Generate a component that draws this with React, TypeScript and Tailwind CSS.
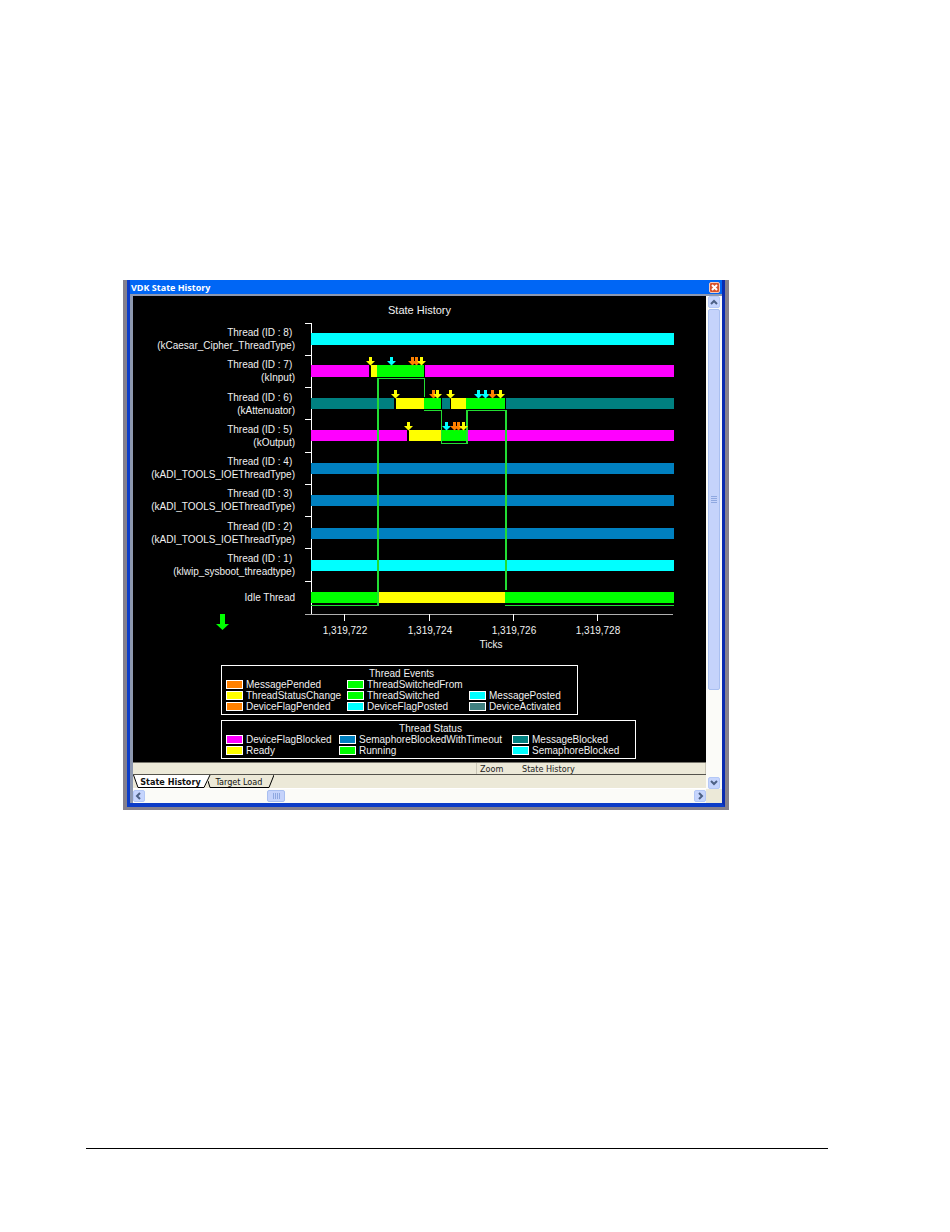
import React from "react";
import { clsx } from "clsx";

const MAGENTA = "#ff00ff";
const YELLOW = "#ffff00";
const GREEN = "#00ff00";
const CYAN = "#00ffff";
const TEAL = "#008080";
const BLUE = "#0080c0";
const ORANGE = "#ff8000";

interface Segment {
  from: number;
  to: number;
  color: string;
}

interface ThreadRow {
  y: number;
  segments: Segment[];
  events?: { x: number; color: string }[];
}

const threadLabels = [
  ["Thread (ID : 8)", "(kCaesar_Cipher_ThreadType)"],
  ["Thread (ID : 7)", "(kInput)"],
  ["Thread (ID : 6)", "(kAttenuator)"],
  ["Thread (ID : 5)", "(kOutput)"],
  ["Thread (ID : 4)", "(kADI_TOOLS_IOEThreadType)"],
  ["Thread (ID : 3)", "(kADI_TOOLS_IOEThreadType)"],
  ["Thread (ID : 2)", "(kADI_TOOLS_IOEThreadType)"],
  ["Thread (ID : 1)", "(klwip_sysboot_threadtype)"],
];

const rows: ThreadRow[] = [
  { y: 13, segments: [{ from: 6, to: 369, color: CYAN }] },
  {
    y: 45,
    segments: [
      { from: 6, to: 64, color: MAGENTA },
      { from: 66, to: 72, color: YELLOW },
      { from: 72, to: 119, color: GREEN },
      { from: 120, to: 369, color: MAGENTA },
    ],
    events: [
      { x: 65, color: YELLOW },
      { x: 86, color: CYAN },
      { x: 107, color: ORANGE },
      { x: 111, color: ORANGE },
      { x: 116, color: YELLOW },
    ],
  },
  {
    y: 78,
    segments: [
      { from: 6, to: 89, color: TEAL },
      { from: 91, to: 119, color: YELLOW },
      { from: 119, to: 136, color: GREEN },
      { from: 137, to: 145, color: TEAL },
      { from: 146, to: 161, color: YELLOW },
      { from: 161, to: 200, color: GREEN },
      { from: 201, to: 369, color: TEAL },
    ],
    events: [
      { x: 90, color: YELLOW },
      { x: 128, color: ORANGE },
      { x: 132, color: YELLOW },
      { x: 145, color: YELLOW },
      { x: 173, color: CYAN },
      { x: 180, color: CYAN },
      { x: 187, color: ORANGE },
      { x: 195, color: YELLOW },
    ],
  },
  {
    y: 110,
    segments: [
      { from: 6, to: 102, color: MAGENTA },
      { from: 104, to: 136, color: YELLOW },
      { from: 136, to: 162, color: GREEN },
      { from: 163, to: 369, color: MAGENTA },
    ],
    events: [
      { x: 103, color: YELLOW },
      { x: 141, color: CYAN },
      { x: 149, color: ORANGE },
      { x: 153, color: ORANGE },
      { x: 158, color: YELLOW },
    ],
  },
  { y: 143, segments: [{ from: 6, to: 369, color: BLUE }] },
  { y: 175, segments: [{ from: 6, to: 369, color: BLUE }] },
  { y: 208, segments: [{ from: 6, to: 369, color: BLUE }] },
  { y: 240, segments: [{ from: 6, to: 369, color: CYAN }] },
  {
    y: 272,
    segments: [
      { from: 6, to: 74, color: GREEN },
      { from: 74, to: 200, color: YELLOW },
      { from: 200, to: 369, color: GREEN },
    ],
  },
];

const rowTicks = [3, 35, 67, 99, 132, 164, 196, 228, 261];

const timeTicks = [
  { x: 39, label: "1,319,722" },
  { x: 124, label: "1,319,724" },
  { x: 208, label: "1,319,726" },
  { x: 292, label: "1,319,728" },
];

const eventLegend = [
  { label: "MessagePended", swatch: "bg-[#ff8000]" },
  { label: "ThreadSwitchedFrom", swatch: "bg-[#00ff00]" },
  null,
  { label: "ThreadStatusChange", swatch: "bg-[#ffff00]" },
  { label: "ThreadSwitched", swatch: "bg-[#00ff00]" },
  { label: "MessagePosted", swatch: "bg-[#00ffff]" },
  { label: "DeviceFlagPended", swatch: "bg-[#ff8000]" },
  { label: "DeviceFlagPosted", swatch: "bg-[#00ffff]" },
  { label: "DeviceActivated", swatch: "bg-[#408080]" },
];

const statusLegend = [
  { label: "DeviceFlagBlocked", swatch: "bg-[#ff00ff]" },
  { label: "SemaphoreBlockedWithTimeout", swatch: "bg-[#0080c0]" },
  { label: "MessageBlocked", swatch: "bg-[#008080]" },
  { label: "Ready", swatch: "bg-[#ffff00]" },
  { label: "Running", swatch: "bg-[#00ff00]" },
  { label: "SemaphoreBlocked", swatch: "bg-[#00ffff]" },
];

const Timeline: React.FC = () => (
  <svg viewBox="0 0 369 330" className="block h-auto w-full" role="img" aria-label="Thread timeline">
    <g shapeRendering="crispEdges">
      {/* axes */}
      <path d="M6.5 3V294" stroke="#fff" />
      <path d="M0 294.5H368" stroke="#b0b0b0" />
      {rowTicks.map((y) => (
        <path key={y} d={`M0 ${y + 0.5}H6`} stroke="#fff" />
      ))}
      {timeTicks.map(({ x }) => (
        <path key={x} d={`M${x + 0.5} 294V301`} stroke="#fff" />
      ))}

      {rows.map(({ y, segments }) => (
        <g key={y}>
          {segments.map(({ from, to, color }) => (
            <rect key={from} x={from} y={y} width={to - from} height={y < 60 ? 12 : 11} fill={color} />
          ))}
        </g>
      ))}

      {/* context switches */}
      <g fill="none" stroke="#22dd33">
        <path d="M6 285.5H73" />
        <path d="M73 286V58" strokeWidth={2} />
        <path d="M72 58.5H119.5V77" />
        <path d="M119 90.5H136.5V123.5H162" />
        <path d="M162 124V90" strokeWidth={2} />
        <path d="M162 90.5H201" />
        <path d="M201 90V270" strokeWidth={2} />
        <path d="M200 285.5H369" />
      </g>
    </g>

    {rows.map(({ y, events }) =>
      events?.map(({ x, color }) => (
        <path
          key={`${y}-${x}`}
          d={`M${x - 1} ${y - 8}h3v4h3l-4.5 4.5l-4.5 -4.5h3z`}
          fill={color}
        />
      ))
    )}

    <g fill="#f0f0f0" fontSize="10" textAnchor="middle">
      {timeTicks.map(({ x, label }) => (
        <text key={x} x={x + 1} y={314}>
          {label}
        </text>
      ))}
      <text x={186} y={328}>
        Ticks
      </text>
    </g>
  </svg>
);

interface LegendProps {
  title: string;
  items: ({ label: string; swatch: string } | null)[];
  className: string;
}

const Legend: React.FC<LegendProps> = ({ title, items, className }) => (
  <section className="w-fit border border-white pb-[2px] pl-1">
    <h3 className="h-[13px] text-center leading-[15px]">{title}</h3>
    <ul className={clsx("grid", className)}>
      {items.map((item, i) => (
        <li key={i} className="flex h-[11px] items-center gap-[3px] leading-[11px] whitespace-nowrap">
          {item && (
            <>
              <span className={clsx("h-[9px] w-[17px] shrink-0 border border-white", item.swatch)} />
              {item.label}
            </>
          )}
        </li>
      ))}
    </ul>
  </section>
);

const ScrollButton: React.FC<{ label: string; d: string }> = ({ label, d }) => (
  <button
    type="button"
    aria-label={label}
    className="flex size-3 shrink-0 items-center justify-center rounded-[2px] border border-[#b4c8f6] bg-[#c6d5fd]"
  >
    <svg viewBox="0 0 10 10" className="size-[10px]" fill="none" stroke="#4d6185" strokeWidth={2}>
      <path d={d} />
    </svg>
  </button>
);

const tabFont = "font-['DejaVu_Sans_Condensed','DejaVu_Sans',sans-serif]";

export default function App() {
  return (
    <main className="bg-white pt-[280px] pb-[83px] font-['Liberation_Sans',Arial,sans-serif] text-[10px]">
      <div className="mr-[221px] ml-[123px] border-x-4 border-b-[3px] border-[#85808c]">
        <div className="border-x-[3px] border-b-4 border-[#0c3cc8] border-r-[#0a2bb0] bg-[#0c3cc8]">
          <header className="flex h-[14px] items-center justify-between bg-[#0066f5] pr-[2px] pl-px">
            <h1 className="font-['Open_Sans',sans-serif] text-[9px] leading-[15px] font-bold text-white">
              VDK State History
            </h1>
            <button
              type="button"
              aria-label="Close"
              className="flex size-[11px] items-center justify-center rounded-[2px] border border-[#f3c9bd] bg-[#d9532c]"
            >
              <svg viewBox="0 0 7 7" className="size-[7px]" stroke="#fff" strokeWidth={2}>
                <path d="M1 1L6 6M6 1L1 6" />
              </svg>
            </button>
          </header>

          <div className="border-t-2 border-l-[3px] border-[#8d98b0] bg-[#ece9d8]">
            <div className="flex">
              <div className="min-w-0 flex-1">
                <div className="bg-black pt-[6px] pb-[3px] text-[#f0f0f0]">
                  <h2 className="h-[18px] text-center text-[11px] leading-[16px]">State History</h2>
                  <div className="flex gap-[10px] pr-8">
                    <div className="flex w-[162px] shrink-0 flex-col pt-[3px] text-right">
                      <ul className="grid h-[258px] grid-rows-8">
                        {threadLabels.map(([id, type]) => (
                          <li key={id} className="flex flex-col justify-center leading-[13px] whitespace-nowrap">
                            <span>{id}&nbsp;</span>
                            <span>{type}</span>
                          </li>
                        ))}
                      </ul>
                      <p className="h-[33px] leading-[33px]">Idle Thread</p>
                      <svg viewBox="0 0 13 16" className="mr-[66px] h-4 w-[13px] self-end" fill={GREEN}>
                        <path d="M4 0h5v10h4l-6.5 6l-6.5 -6h4z" />
                      </svg>
                    </div>
                    <div className="min-w-0 flex-1">
                      <Timeline />
                    </div>
                  </div>
                  <div className="mt-[15px] ml-[88px] flex flex-col gap-[5px]">
                    <Legend
                      title="Thread Events"
                      items={eventLegend}
                      className="grid-cols-[121px_122px_108px]"
                    />
                    <Legend
                      title="Thread Status"
                      items={statusLegend}
                      className="grid-cols-[113px_173px_123px]"
                    />
                  </div>
                </div>

                <div
                  className={clsx(
                    "flex h-3 justify-end border-t border-[#77756c] text-[9px] leading-[12px] text-[#222]",
                    tabFont
                  )}
                >
                  <span className="w-[42px] border-l border-[#c9c6b6] pl-[3px]">Zoom</span>
                  <span className="w-[188px] border-r border-[#c9c6b6] pl-1">State History</span>
                </div>

                <nav
                  className={clsx(
                    "flex h-[15px] border-t border-b border-t-[#55534c] border-b-white text-[9px] text-[#111]",
                    tabFont
                  )}
                >
                  <button type="button" className="relative h-[13px] w-[75px] font-bold">
                    <svg viewBox="0 0 78 13" className="absolute top-0 left-0 h-[13px] w-[78px]">
                      <path d="M0 0L5 13H71L77 0" fill="#fff" />
                      <path d="M0.5 0L5 12.5H71L77 0" fill="none" stroke="#000" />
                    </svg>
                    <span className="relative block leading-[12px]">State History</span>
                  </button>
                  <button type="button" className="relative h-[13px] w-[66px]">
                    <svg viewBox="0 0 66 13" className="absolute top-0 left-0 h-[13px] w-[66px]" fill="none" stroke="#000">
                      <path d="M0 6L2 12.5H61L66 0" />
                    </svg>
                    <span className="relative block pr-1 leading-[12px]">Target Load</span>
                  </button>
                </nav>
              </div>

              {/* vertical scrollbar */}
              <div className="flex w-4 flex-col items-center bg-[#fbfbf8]">
                <ScrollButton label="Scroll up" d="M2 7L5 4L8 7" />
                <button
                  type="button"
                  aria-label="Vertical scroll thumb"
                  className="mt-px flex h-[381px] w-3 items-center justify-center rounded-[2px] border border-[#a9bff0] bg-[#c5d3fb]"
                >
                  <svg viewBox="0 0 6 7" className="h-[7px] w-[6px]" stroke="#8fa8e0">
                    <path d="M0 .5H6M0 2.5H6M0 4.5H6M0 6.5H6" />
                  </svg>
                </button>
                <div className="flex-1" />
                <ScrollButton label="Scroll down" d="M2 3L5 6L8 3" />
              </div>
            </div>

            {/* horizontal scrollbar */}
            <div className="flex pr-4">
              <div className="flex h-[14px] flex-1 items-center bg-[#fbfbf8]">
                <ScrollButton label="Scroll left" d="M6 2L3 5L6 8" />
                <div className="w-[122px]" />
                <button
                  type="button"
                  aria-label="Horizontal scroll thumb"
                  className="flex h-3 w-[18px] items-center justify-center rounded-[2px] border border-[#a9bff0] bg-[#c5d3fb]"
                >
                  <svg viewBox="0 0 7 6" className="h-[6px] w-[7px]" stroke="#8fa8e0">
                    <path d="M.5 0V6M2.5 0V6M4.5 0V6M6.5 0V6" />
                  </svg>
                </button>
                <div className="flex-1" />
                <ScrollButton label="Scroll right" d="M4 2L7 5L4 8" />
              </div>
            </div>
          </div>
        </div>
      </div>
      <hr className="mt-[338px] mr-[122px] ml-[86px] border-t border-black" />
    </main>
  );
}
